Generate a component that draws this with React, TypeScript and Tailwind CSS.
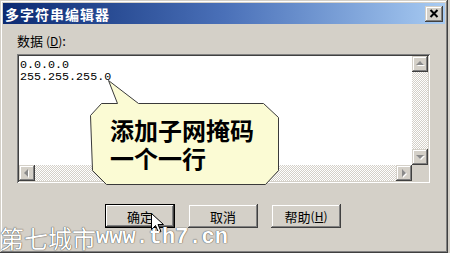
import React from "react";

const raised =
  "shadow-[inset_-1px_-1px_#404040,inset_1px_1px_#d4d0c8,inset_-2px_-2px_#808080,inset_2px_2px_#ffffff]";

function Tri({ dir }: { dir: "up" | "down" | "left" | "right" }) {
  const pts: Record<string, string> = {
    up: "4,9 8,5 12,9",
    down: "4,6 8,10 12,6",
    left: "9,4 5,8 9,12",
    right: "6,4 10,8 6,12",
  };
  return (
    <svg width="16" height="16" viewBox="0 0 16 16">
      <polygon points={pts[dir]} fill="#ffffff" transform="translate(1,1)" />
      <polygon points={pts[dir]} fill="#8a8a8a" />
    </svg>
  );
}

function SBtn({ dir }: { dir: "up" | "down" | "left" | "right" }) {
  return (
    <div className={`w-[16px] h-[16px] shrink-0 bg-[#d4d0c8] ${raised} flex items-center justify-center`}>
      <Tri dir={dir} />
    </div>
  );
}

const track =
  "bg-[repeating-conic-gradient(#d4d0c8_0_25%,#ffffff_0_50%)] bg-[length:2px_2px]";

function Btn({ children, def }: { children: React.ReactNode; def?: boolean }) {
  return (
    <div
      className={`w-[70px] h-[24px] bg-[#d4d0c8] flex items-center justify-center text-[13px] leading-none text-black ${
        def
          ? "shadow-[inset_0_0_0_1px_#000000,inset_-2px_-2px_#404040,inset_2px_2px_#ffffff,inset_-3px_-3px_#808080]"
          : raised
      }`}
    >
      {children}
    </div>
  );
}

export default function App() {
  return (
    <div
      className="relative w-[450px] h-[253px] bg-[#d4d0c8] overflow-hidden"
      style={{ fontFamily: '"Noto Sans CJK SC", "Noto Sans", sans-serif' }}
    >
      <div className="w-[448px] h-[253px] p-[3px] flex flex-col shadow-[inset_-1px_-1px_#404040,inset_1px_1px_#d4d0c8,inset_-2px_-2px_#808080,inset_2px_2px_#ffffff]">
        {/* title bar */}
        <div className="h-[21px] shrink-0 bg-linear-to-r from-[#0c2a72] via-[#4a70b8] to-[#a8cbf2] flex items-center pl-[2px] pr-[2px]">
          <span className="text-white font-bold text-[14px] tracking-[1px] leading-none">多字符串编辑器</span>
          <div className={`ml-auto w-[18px] h-[16px] bg-[#d4d0c8] ${raised} flex items-center justify-center`}>
            <svg width="10" height="9" viewBox="0 0 10 9">
              <path d="M1.5 1 L8.5 8 M8.5 1 L1.5 8" stroke="#000" strokeWidth="2" />
            </svg>
          </div>
        </div>

        {/* content */}
        <div className="pl-[14px] flex flex-col">
          <div className="mt-[10px] text-[13px] leading-[14px] text-black">
            数据 <span className="text-[12px]">(<span className="underline">D</span>)</span>:
          </div>
          <div className="mt-[6px] w-[413px] h-[129px] shadow-[inset_1px_1px_#808080,inset_-1px_-1px_#ffffff,inset_2px_2px_#404040,inset_-2px_-2px_#d4d0c8] p-[2px]">
            <div className="w-full h-full grid grid-cols-[1fr_16px] grid-rows-[1fr_16px] bg-white">
              <div
                className="pl-[1px] pt-[3px] text-[11.7px] leading-[12px] text-black"
                style={{ fontFamily: '"Liberation Mono", monospace' }}
              >
                <div>0.0.0.0</div>
                <div>255.255.255.0</div>
              </div>
              <div className={`flex flex-col ${track}`}>
                <SBtn dir="up" />
                <div className="flex-1" />
                <SBtn dir="down" />
              </div>
              <div className={`flex ${track}`}>
                <SBtn dir="left" />
                <div className="flex-1" />
                <SBtn dir="right" />
              </div>
              <div className="bg-[#d4d0c8]" />
            </div>
          </div>
          <div className="mt-[21px] pl-[88px] flex gap-[13px]">
            <Btn def>确定</Btn>
            <Btn>取消</Btn>
            <Btn>
              帮助 <span className="text-[12px]">(<span className="underline">H</span>)</span>
            </Btn>
          </div>
        </div>
      </div>

      {/* callout */}
      <svg className="absolute left-0 top-0" width="450" height="253" viewBox="0 0 450 253">
        <polygon
          points="101.5,103.5 117.5,103.5 108.5,80.5 138.5,103.5 263.5,103.5 278.5,117.5 278.5,170.5 265.5,184.5 106.5,184.5 92.5,170.5 90.5,115.5"
          fill="#fbfbd4"
          stroke="#3a3a3a"
          strokeWidth="1"
        />
      </svg>
      <div className="absolute left-[110px] top-[116px] text-[24px] leading-[28px] font-bold text-black">
        <div>添加子网掩码</div>
        <div>一个一行</div>
      </div>

      {/* cursor */}
      <svg className="absolute left-[151px] top-[213px]" width="14" height="22" viewBox="0 0 14 22">
        <path
          d="M0.5 0.5 L0.5 16.5 L4.5 12.5 L7.5 19.5 L10 18.5 L7 11.5 L12.5 11.5 Z"
          fill="#ffffff"
          stroke="#000000"
          strokeWidth="1"
        />
      </svg>

      {/* watermark */}
      <div className="absolute left-0 top-[225px] flex items-end text-white leading-[26px] [text-shadow:0_0_1px_#444,0_0_1px_#444]">
        <span className="text-[24px]" style={{ fontFamily: '"Noto Sans CJK SC", serif' }}>
          第七城市
        </span>
        <span className="text-[22px] font-bold" style={{ fontFamily: '"Liberation Mono", monospace' }}>
          www.th7.cn
        </span>
      </div>
    </div>
  );
}
